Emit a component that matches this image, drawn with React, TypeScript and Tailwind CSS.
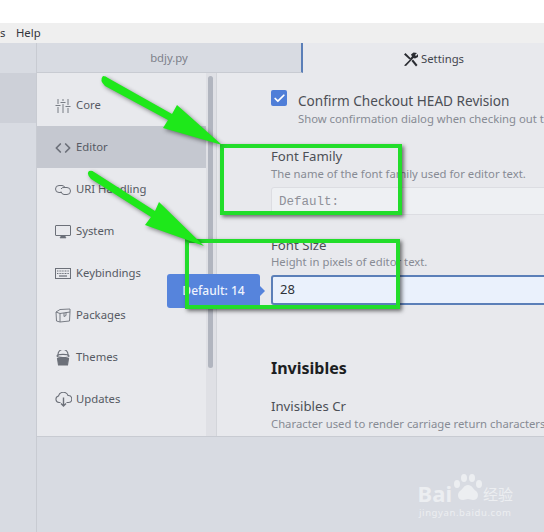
import { Code, ArrowDown, Check } from 'lucide-react'

const navItems = [
  { label: 'Core', icon: <SlidersIcon /> },
  { label: 'Editor', icon: <Code size={16} strokeWidth={2.6} />, active: true },
  { label: 'URI Handling', icon: <LinkIcon /> },
  { label: 'System', icon: <MonitorIcon /> },
  { label: 'Keybindings', icon: <KeyboardIcon /> },
  { label: 'Packages', icon: <BoxIcon /> },
  { label: 'Themes', icon: <BucketIcon /> },
  { label: 'Updates', icon: <CloudIcon /> },
  { label: 'Install', icon: <ArrowDown size={16} strokeWidth={1.6} /> },
]

function SlidersIcon() {
  return (
    <svg width="16" height="14" viewBox="0 0 16 14" fill="none" stroke="currentColor" strokeWidth="0.9">
      <path d="M3 0v5M3 8v6M8 0v2M8 5v9M13 0v6M13 9v5M0.5 6.5h5M5.5 3.5h5M10.5 7.5h5" />
    </svg>
  )
}

function LinkIcon() {
  return (
    <svg width="16" height="12" viewBox="0 0 16 12" fill="none" stroke="currentColor" strokeWidth="1">
      <path d="M6 8.500H4a3.500 3.500 0 0 1 0-7h3a3.500 3.500 0 0 1 3 2" />
      <path d="M6 5a3 3 0 0 1 3-1.500h3a3.500 3.500 0 0 1 0 7H9a3.500 3.500 0 0 1-3-3" />
    </svg>
  )
}

function MonitorIcon() {
  return (
    <svg width="16" height="14" viewBox="0 0 16 14" fill="none" stroke="currentColor">
      <rect x="0.5" y="0.5" width="15" height="10" rx="0.5" />
      <path d="M5 13h6l-1-2H6Z" fill="currentColor" strokeWidth="0.6" />
    </svg>
  )
}

function KeyboardIcon() {
  return (
    <svg width="16" height="11" viewBox="0 0 16 11" fill="none" stroke="currentColor">
      <rect x="0.5" y="0.5" width="15" height="10" />
      <path d="M2 3h12M2 5.500h12" strokeWidth="1.2" strokeDasharray="1 0.6" />
      <path d="M4 8h8" strokeWidth="1.2" />
    </svg>
  )
}

function BoxIcon() {
  return (
    <svg width="16" height="15" viewBox="0 0 16 15" fill="none" stroke="currentColor" strokeWidth="0.9">
      <path d="M1 4 5 1.500 15 1v3L14.500 13 5 14 1.500 13Z" />
      <path d="M1 4 5 5.500 15 4M5 5.500V14M9 5V8.500L11 7.500V4.500" />
    </svg>
  )
}

function BucketIcon() {
  return (
    <svg width="14" height="16" viewBox="0 0 14 16" fill="none" stroke="currentColor" strokeWidth="1.1">
      <path d="M2 6V4.500a5 5 0 0 1 10 0V6" />
      <ellipse cx="7" cy="6" rx="6" ry="1.6" />
      <path d="M1.500 8.500 2.500 15h9l1-6.500Z" fill="currentColor" />
    </svg>
  )
}

function CloudIcon() {
  return (
    <svg width="17" height="15" viewBox="0 0 17 15" fill="none" stroke="currentColor" strokeWidth="1.1">
      <path d="M5.500 10.500H4a3.300 3.300 0 0 1-.5-6.500A5 5 0 0 1 13 3.500a3.500 3.500 0 0 1 .5 7h-2" />
      <path d="M8.500 5.500v8.500M6 11.500 8.500 14l2.500-2.500" strokeWidth="1.4" />
    </svg>
  )
}

function ToolsIcon() {
  return (
    <svg width="15" height="15" viewBox="0 0 15 15" fill="#2b2d33">
      <path d="M1 2.500 2.500 1l5 5 1.500-1.500-1-2L10.500 0.500 14 1l-2 2 1 1 2-2v3l-3 1.500-1.500-.5L3 14l-2-.5L8 6.500 6.500 7.500Z" />
      <path d="M8.500 9 10 7.500l4.500 5.500-1.500 1.500Z" />
    </svg>
  )
}

function GreenBox({ className }: { className: string }) {
  return <div className={`pointer-events-none absolute border-[4px] border-[#22dd2a] shadow-[2px_2px_4px_rgba(0,0,0,0.55)] ${className}`} />
}

export default function App() {
  return (
    <div className="relative flex h-[532px] w-[544px] flex-col overflow-hidden bg-white font-['Noto_Sans',sans-serif] text-[11.3px]">
      <div className="h-[23px] shrink-0 bg-white" />

      {/* Menu bar */}
      <div className="flex h-[20px] shrink-0 items-center bg-[#efefef] text-[#33363c]">
        <span className="w-[16px]">s</span>
        <span>Help</span>
      </div>

      <div className="flex min-h-0 flex-1">
        {/* Left tree panel */}
        <div className="w-[37px] shrink-0 border-r border-[#c8cbd2] bg-[#d8dbe2] pt-[30px]">
          <div className="h-[50px] bg-[#cdd0d8]" />
        </div>

        <div className="flex min-w-0 flex-1 flex-col">
          {/* Tabs */}
          <div className="flex h-[30px] shrink-0">
            <div className="flex w-[266px] items-center justify-center border-r-2 border-b border-r-[#5b7fb8] border-b-[#c8cbd2] bg-[#d8dbe2] pt-[2px] text-[#7d818a]">
              bdjy.py
            </div>
            <div className="flex flex-1 items-center justify-center gap-[3px] bg-[#e8e9ed] pt-[2px] pl-[20px] text-[#43464d]">
              <ToolsIcon />
              Settings
            </div>
          </div>

          {/* Settings view */}
          <div className="flex h-[364px] shrink-0 overflow-hidden border-b border-[#c8cbd2] bg-[#e8e9ed]">
            <nav className="w-[169px] shrink-0 pt-[11px]">
              {navItems.map((item) => (
                <div
                  key={item.label}
                  className={`flex h-[42px] items-center pt-[1px] text-[#565a63] ${item.active ? 'bg-[#c5c8d0]' : ''}`}
                >
                  <span className="flex w-[39px] shrink-0 justify-center pl-[13px] text-[#6c7079]">{item.icon}</span>
                  {item.label}
                </div>
              ))}
            </nav>

            {/* Scrollbar */}
            <div className="w-[11px] shrink-0 border-r border-[#d3d5da] bg-[#dfe0e5] pt-[3px] pl-[2px]">
              <div className="h-[292px] w-[5px] rounded-[3px] bg-[#b1b5bf]" />
            </div>

            <div className="w-[400px] shrink-0 whitespace-nowrap pt-[16px] pl-[54px]">
              <div className="flex">
                <span className="mt-[1px] flex h-[16px] w-[16px] shrink-0 items-center justify-center rounded-[2px] bg-[#4f7ed8] text-white">
                  <Check size={13} strokeWidth={3.2} />
                </span>
                <div className="mt-[2px] ml-[11px]">
                  <div className="text-[13.600px] leading-[20px] text-[#4c4f56]">Confirm Checkout HEAD Revision</div>
                  <div className="leading-[16px] text-[#878b94]">Show confirmation dialog when checking out the HEAD revision</div>
                </div>
              </div>

              <div className="mt-[20px] text-[13.200px] leading-[18px] text-[#4c4f56]">Font Family</div>
              <div className="mt-[1px] leading-[16px] text-[#878b94]">The name of the font family used for editor text.</div>
              <div className="mt-[5px] flex h-[28px] items-center rounded-l-[3px] border border-[#dcdde2] bg-[#eef0f3] pt-[3px] pl-[7px] font-['Liberation_Mono',monospace] text-[12.500px] text-[#8e9199]">
                Default:
              </div>

              <div className="mt-[21px] text-[13.200px] leading-[18px] text-[#4c4f56]">Font Size</div>
              <div className="leading-[16px] text-[#878b94]">Height in pixels of editor text.</div>
              <div className="mt-[5px] flex h-[30px] items-center rounded-l-[3px] border-2 border-[#5b7fb8] bg-[#eaf1fc] pl-[7px] text-[13px] text-[#2f3238]">
                28
              </div>

              <h2 className="mt-[52px] text-[16px] leading-[22px] font-bold text-[#1c1e22]">Invisibles</h2>
              <div className="mt-[18px] text-[13.200px] leading-[18px] text-[#4c4f56]">Invisibles Cr</div>
              <div className="mt-[1px] leading-[16px] text-[#878b94]">Character used to render carriage return characters</div>
              <div className="leading-[16px] text-[#878b94]">enabled.</div>
            </div>
          </div>

          <div className="relative flex-1 bg-[#d8dbe2]">
            {/* Watermark */}
            <div className="absolute top-[37px] right-[31px] flex flex-col items-center text-[#eceef1]">
              <div className="flex items-end gap-[1px] leading-none">
                <span className="text-[22px] font-bold">Bai</span>
                <svg width="29" height="30" viewBox="0 0 29 30" fill="currentColor">
                  <ellipse cx="4" cy="10" rx="3" ry="4" />
                  <ellipse cx="11" cy="4" rx="3" ry="4" />
                  <ellipse cx="19" cy="4" rx="3" ry="4" />
                  <ellipse cx="26" cy="10" rx="3" ry="4" />
                  <path d="M15 11c-4 0-5 4-8 6s-3 9 3 9c2 0 3-1 5-1s3 1 5 1c6 0 6-7 3-9s-4-6-8-6Z" />
                </svg>
                <span className="pb-[3px] font-['Noto_Sans_CJK_SC',sans-serif] text-[15px]">经验</span>
              </div>
              <span className="mt-[3px] text-[9.500px] leading-[12px] tracking-[0.6px]">jingyan.baidu.com</span>
            </div>
          </div>
        </div>
      </div>

      {/* Tooltip */}
      <div className="absolute top-[274px] left-[167px] flex h-[34px] w-[93px] items-center justify-center rounded-[3px] bg-[#5684dc] text-[12px] font-medium text-[#eef3fd]">
        Default: 14
        <span className="absolute top-[12px] -right-[5px] h-0 w-0 border-y-[5px] border-l-[5px] border-y-transparent border-l-[#5684dc]" />
      </div>

      {/* Annotations drawn over the screenshot */}
      <GreenBox className="top-[144px] left-[220px] h-[71px] w-[182px]" />
      <GreenBox className="top-[239px] left-[185px] h-[70px] w-[215px]" />
      <svg className="pointer-events-none absolute top-0 left-0 drop-shadow-[2px_2px_2px_rgba(0,0,0,0.45)]" width="544" height="532" fill="#1ee81a">
        <path d="M103 76 Q106 76 108 78 L172 114 L177 105 L222 145 L163 128 L168 120 L105 86 Q99 80 103 76 Z" />
        <path d="M89 171 Q92 170 94 172 L155 211 L159 202 L204 246 L145 225 L151 217 L91 179 Q86 174 89 171 Z" />
      </svg>
    </div>
  )
}
